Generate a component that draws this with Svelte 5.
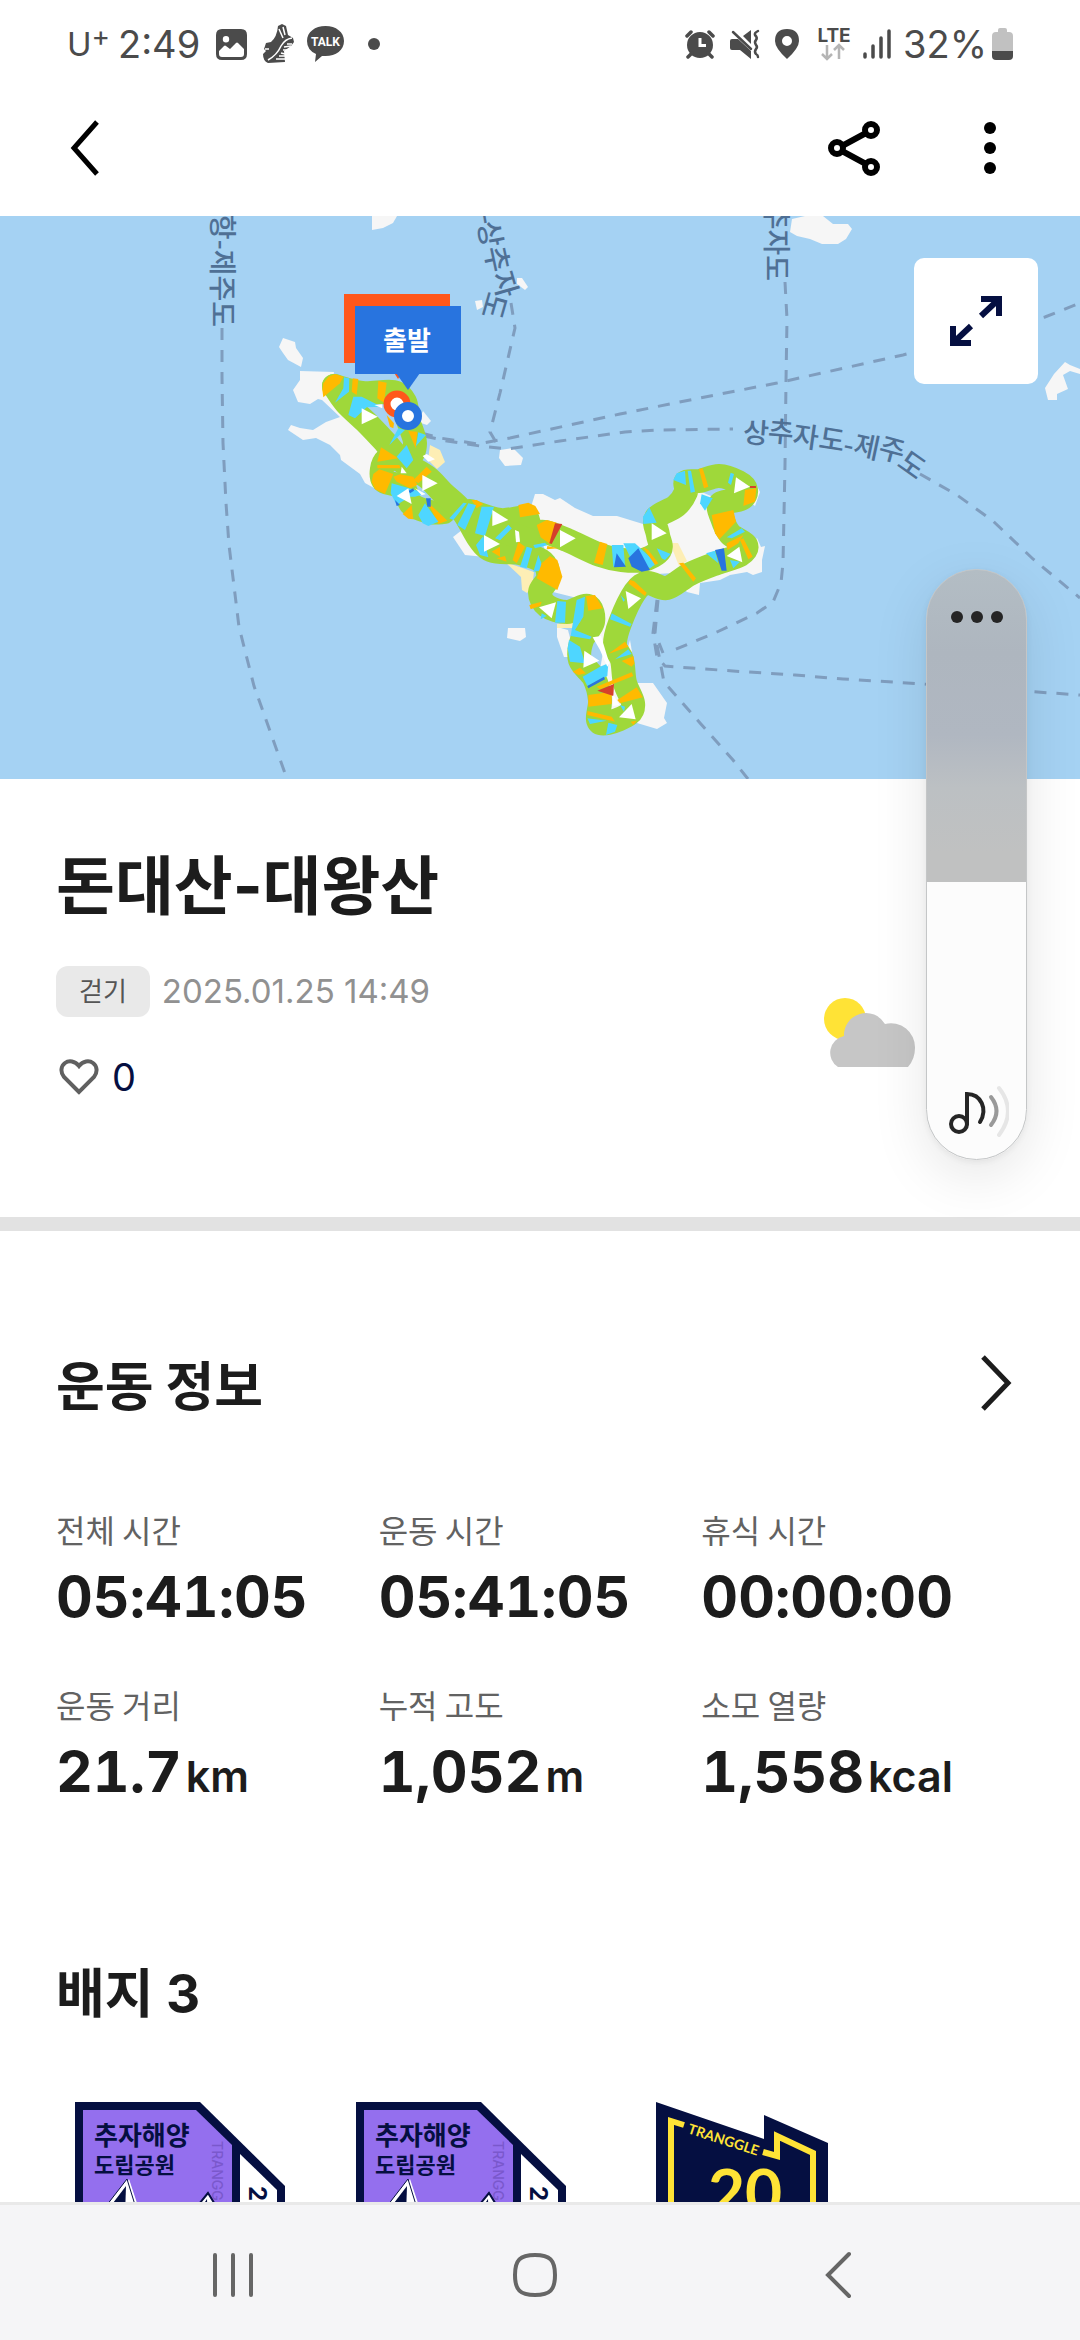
<script>
  let volume = $state(47);
  let likes = $state(0);

  const stats = [
    { label: '전체 시간', value: '05:41:05' },
    { label: '운동 시간', value: '05:41:05' },
    { label: '휴식 시간', value: '00:00:00' },
    { label: '운동 거리', value: '21.7', unit: 'km' },
    { label: '누적 고도', value: '1,052', unit: 'm' },
    { label: '소모 열량', value: '1,558', unit: 'kcal' }
  ];

  const islands = [
    '372,216 397,216 393,223 383,228 372,230',
    '517,278 522,278 528,287 525,290 517,284',
    '475,301 482,300 483,307 477,310',
    '500,450 513,448 523,458 521,465 505,466 499,458',
    '283,338 295,342 296,348 303,358 301,367 288,360 283,353 279,347',
    '300,371 334,372 330,396 345,417 360,416 385,440 378,470 374,488 365,483 360,474 341,460 340,455 330,445 316,438 303,440 288,430 291,425 300,428 313,430 326,422 340,417 322,400 318,399 310,404 298,402 293,390 300,380',
    '423,411 431,421 427,425 418,422',
    '535,494 543,494 555,500 560,498 575,508 593,516 617,516 643,524 668,524 697,490 720,500 738,545 690,572 640,575 610,622 612,700 600,640 585,600 545,590 545,550 530,510',
    '755,482 760,492 755,506 748,500',
    '757,538 761,547 765,546 762,560 762,572 753,575 747,572 730,575 720,580 700,583 699,595 687,592 680,585 740,560',
    '630,683 653,683 667,703 664,718 667,723 657,729 637,723',
    '605,640 640,710 612,712 600,670',
    '557,627 568,630 575,657 564,657 557,637',
    '585,680 610,680 610,710 592,700',
    '508,628 525,628 526,637 520,641 507,638',
    '453,537 462,530 490,543 485,557 465,555',
    '630,640 632,652 626,655',
    '790,232 792,219 805,216 823,216 833,224 848,224 852,229 846,239 838,244 822,244 810,239 797,236',
    '1065,362 1070,365 1080,369 1080,374 1070,371 1063,375 1068,389 1057,394 1057,400 1048,400 1045,388 1054,374'
  ];

  const beaches = [
    '430,445 440,450 445,462 437,469 428,460',
    '505,562 534,572 532,587 527,593 522,590 521,577',
    '670,543 678,543 687,561 679,566',
    '557,624 575,622 575,628 557,628',
    '462,529 484,538 482,541 461,532'
  ];

  const ferries = [
    'M222 328 L222 377 L223 443 L226 503 L229 545 L239 627 L254 686 L287 779',
    'M511 303 L515 328 L500 393 L490 432 L497 444',
    'M785 282 L787 319 L786 381 L785 465 L783 563 L781 583 L773 602 L757 613 L717 632 L667 653',
    'M421 433 L440 438 L478 444 L510 438 L620 414 L700 398 L777 383 L903 355 L1045 317 L1080 303',
    'M424 436 L447 441 L480 446 L508 449 L560 441 L625 432 L660 430 L733 429',
    'M920 474 L957 495 L993 521 L1033 559 L1080 598',
    'M657 600 L653 633 L657 657 L665 666 L677 667 L733 671 L795 675 L843 679 L923 684 L1080 695',
    'M658 600 L655 633 L663 653',
    'M657 645 L664 682 L700 723 L733 760 L748 779'
  ];

  const tracks = [
    '334 386 362 393 393 392 405 402 408 420 415 443 408 458 386 460 383 480 403 487 411 504 430 512 444 512',
    '334 386 346 403 367 423 385 442 403 462 427 477 443 493 463 512 487 548 520 553 543 562 548 578 540 592 547 606 567 612 588 606 593 622 582 640 580 660 594 678 600 700 598 720 608 723 629 714 633 703 625 683 622 660 615 645 620 623 635 592 648 583 667 588 690 574 717 563 740 555 746 545 730 534 722 518 720 504 741 499 746 490 738 482 719 476 700 481 686 482 686 492 676 506 656 518 658 535 660 550 643 560 622 560 600 555 567 540 545 532 530 532 526 518 500 520 470 511',
    '470 520 500 530 528 540'
  ].map(smooth);

  // Rounded path through every listed point.
  function smooth(list) {
    const n = list.split(' ').map(Number);
    const p = [];
    for (let i = 0; i < n.length; i += 2) p.push([n[i], n[i + 1]]);
    let d = `M${p[0]}`;
    for (let i = 0; i < p.length - 1; i++) {
      const a = p[i - 1] ?? p[i];
      const b = p[i];
      const c = p[i + 1];
      const e = p[i + 2] ?? c;
      d += `C${b[0] + (c[0] - a[0]) / 6} ${b[1] + (c[1] - a[1]) / 6} ${c[0] - (e[0] - b[0]) / 6} ${c[1] - (e[1] - b[1]) / 6} ${c[0]} ${c[1]}`;
    }
    return d;
  }

  // Pace colouring and direction arrows, drawn on three tiles at triple density.
  const O = '#ffba00';
  const C = '#4ed6ff';
  const B = '#2874df';
  const R = '#d5402b';
  const W = '#ffffff';
  const tiles = [
    {
      x: 180,
      y: 210,
      shapes: [
        [O, '427,540 430,520 445,500 465,492 490,500 480,520 430,562'],
        [O, '518,505 535,507 530,555 515,545'],
        [O, '595,513 620,518 612,578 592,565'],
        [O, '603,712 655,745 592,755'],
        [O, '592,765 658,765 662,775 592,775'],
        [O, '575,815 580,792 598,778 640,792 615,852 585,838'],
        [O, '640,800 660,793 700,800 712,825 690,835 650,815'],
        [O, '740,770 755,785 715,820 700,810'],
        [O, '685,663 712,665 707,715'],
        [O, '620,615 642,640 640,655 630,650'],
        [O, '668,912 695,885 700,928 685,926'],
        [O, '742,875 802,932 775,942'],
        [O, '875,870 890,870 910,882 890,895'],
        [O, '1015,885 1045,878 1066,888 1080,912 1020,922'],
        [C, '492,502 508,505 507,545 465,578 490,535'],
        [C, '520,560 545,560 605,590 560,592 525,625 505,615'],
        [C, '655,655 675,660 628,705'],
        [C, '715,667 738,675 708,708'],
        [C, '680,705 700,750 680,775 650,740'],
        [C, '635,820 740,850 705,860 690,860 650,885 632,850'],
        [C, '735,880 775,935 745,948 728,940 715,915'],
        [C, '850,878 860,880 820,930 808,925'],
        [C, '865,880 888,885 855,960 832,945'],
        [C, '905,890 942,890 915,978 885,970'],
        [C, '985,945 995,955 960,990 945,985'],
        [B, '738,865 752,865 752,890 742,890'],
        [B, '645,870 660,885 650,888'],
        [B, '685,843 700,835 702,842 690,850'],
        [W, '583,585 607,583 607,595'],
        [W, '665,770 680,790 662,790'],
        [W, '728,738 740,732 765,748 745,755'],
        [W, '705,835 738,852 725,856'],
        [W, '545,595 545,643 593,620'],
        [W, '727,795 727,843 773,820'],
        [W, '650,858 685,835 695,882'],
        [W, '937,900 937,948 985,930']
      ]
    },
    {
      x: 270,
      y: 400,
      shapes: [
        [O, '800,375 830,360 860,368 840,432 812,412'],
        [R, '855,370 877,372 845,432 838,430'],
        [C, '618,435 640,408 655,472 630,465'],
        [O, '665,455 690,440 690,470'],
        [O, '680,475 705,468 710,485'],
        [O, '745,425 765,440 740,490 728,480'],
        [C, '770,440 787,445 770,505 750,500'],
        [C, '805,465 822,510 790,515'],
        [C, '790,435 825,428 832,436 795,445'],
        [O, '832,438 865,445 830,448'],
        [C, '715,375 725,385 690,420 680,415'],
        [O, '840,468 862,480 877,530 862,570 800,535 815,490'],
        [W, '735,390 747,395 750,425 738,427'],
        [W, '642,405 642,455 690,432'],
        [W, '807,622 858,607 845,655']
      ]
    },
    {
      x: 500,
      y: 400,
      shapes: [
        [O, '300,425 322,432 308,495 282,488'],
        [C, '335,435 370,435 375,495 340,500'],
        [B, '350,460 378,500 342,502'],
        [C, '370,430 405,430 470,490 450,505 390,470'],
        [B, '385,475 415,445 450,510 425,515 395,500'],
        [O, '428,440 445,450 475,490 465,495'],
        [C, '470,445 512,462 495,480 485,475'],
        [C, '429,350 448,322 470,368 430,372'],
        [C, '520,240 530,220 555,212 558,255'],
        [C, '563,212 573,212 585,275 572,278'],
        [O, '597,207 608,205 625,260 612,265'],
        [C, '692,218 702,222 693,255 684,248'],
        [C, '605,283 638,295 615,332 600,310'],
        [O, '735,270 769,265 765,305 730,318'],
        [R, '750,258 768,258 768,264 750,264'],
        [O, '635,345 700,330 708,365 658,418 645,400'],
        [C, '725,385 735,395 695,415 680,412'],
        [O, '680,430 730,405 715,430 682,450'],
        [O, '720,420 730,415 758,470 745,478'],
        [C, '690,480 720,485 700,505'],
        [B, '645,450 672,445 680,512 665,512'],
        [C, '618,460 645,452 655,490'],
        [O, '537,490 550,488 588,535 580,545'],
        [O, '390,540 402,543 440,578 435,588 385,550'],
        [C, '362,585 375,600 370,605'],
        [C, '335,640 395,672 390,680 330,658'],
        [O, '375,725 385,740 325,762'],
        [O, '400,768 403,790 395,800 365,783'],
        [C, '385,748 395,762 345,778'],
        [O, '395,817 400,828 300,868 290,860'],
        [O, '410,862 428,892 360,910 352,900'],
        [O, '265,885 335,875 335,912 265,920'],
        [R, '292,872 342,852 340,888'],
        [C, '248,830 300,800 325,790 322,828 262,858'],
        [B, '262,858 312,830 315,838 265,865'],
        [C, '207,720 240,740 255,790 210,785 203,745'],
        [C, '230,600 255,590 250,650 225,690 275,710 270,718 212,708'],
        [O, '258,588 285,585 308,625 265,632'],
        [C, '172,603 198,605 195,668 165,668'],
        [O, '88,615 125,605 120,618 92,628'],
        [C, '125,640 140,648 122,658'],
        [O, '218,815 240,803 258,820 235,825'],
        [O, '262,933 335,950 345,965 262,945'],
        [C, '262,955 320,962 270,972'],
        [C, '325,968 352,975 345,995 318,1005'],
        [C, '360,915 375,920 372,935'],
        [O, '392,965 410,962 400,975'],
        [W, '278,712 303,708 328,790 322,800 300,750'],
        [W, '340,885 358,915 338,918'],
        [W, '180,390 180,442 227,415'],
        [W, '455,370 455,420 500,400'],
        [W, '708,232 702,280 750,260'],
        [W, '680,468 718,440 727,487'],
        [W, '377,573 385,627 423,595'],
        [W, '253,752 250,803 298,782'],
        [W, '357,952 395,912 407,958']
      ]
    }
  ];

  // Place names that bend along a ferry line: glyph, centre and angle.
  const bentLabels = [
    ['-', 487, 219, 80],
    ['상', 490, 234, 80],
    ['추', 497, 259, 78],
    ['자', 505, 284, 74],
    ['도', 494, 306, 106],
    ['상', 756, 433, 4],
    ['추', 781, 432, 5],
    ['자', 806, 437, 8],
    ['도', 832, 440, 9],
    ['-', 849, 445, 12],
    ['제', 867, 447, 12],
    ['주', 892, 450, 15],
    ['도', 912, 465, 35]
  ];
</script>

{#snippet parkBadge()}
  <svg class="badge-art" viewBox="0 0 212 200" aria-hidden="true">
    <path d="M0 0H125L210 84V200H0z" fill="#050f41" />
    <path d="M8 8H121L157 43V200H8z" fill="#946fee" />
    <path d="M165 52L202 88V200H165z" fill="#fff" />
    <text class="park-name" x="19" y="43" font-size="26">추자해양</text>
    <text class="park-name" x="19" y="71" font-size="22">도립공원</text>
    <text class="park-brand" transform="translate(137 39) rotate(90)">TRANGGLE</text>
    <text class="park-no" transform="translate(174 84) rotate(90)">20</text>
    <path d="M54 77L63 104L88 200H-4z" fill="#fff" />
    <path d="M52 77L8 134V200H90z" fill="#fff" stroke="#050f41" stroke-width="1" />
    <path d="M51 84L22 122L8 141V200H47z" fill="#050f41" />
    <path d="M133 91L120 107L105 130V200H157V130z" fill="#fff" stroke="#050f41" stroke-width="2" />
    <path d="M132 97L110 130V200H136z" fill="#050f41" />
  </svg>
{/snippet}

<div class="phone">
  <header class="status">
    <div class="status-side">
      <span class="carrier">U<sup>+</sup></span>
      <time>2:49</time>
      <svg class="s-photo" width="31" height="31" viewBox="0 0 31 31" aria-hidden="true">
        <path fill-rule="evenodd" d="M6 0H25Q31 0 31 6V25Q31 31 25 31H6Q0 31 0 25V6Q0 0 6 0zM10 7A3.200 3.200 0 1 0 10 13.400A3.200 3.200 0 1 0 10 7zM3 22V25Q3 28 6 28H25Q28 28 28 25V20L22 14Q21 13 20 14L14 20L10 17Q9 16 8 17z" />
      </svg>
      <svg class="s-shoe" width="31" height="40" viewBox="0 0 31 40" aria-hidden="true">
        <path d="M15 2L19 0L23 2L25 11L30 14L31 18L28 22L21 27L22 38L5 39Q0 37 0 30L3 27L1 25L3 19L8 18Q14 13 15 2z" />
        <path d="M29 14Q22 15 18 22Q14 31 5 36M24 20H29M21 23L28 22M20 26H25M18 29L22 30M16 32H22M13 35H22M20 3L22 11M16 5L20 14M2 25H6" fill="none" stroke="#fff" stroke-width="1.500" />
      </svg>
      <svg width="37" height="36" viewBox="0 0 37 36" aria-hidden="true">
        <path d="M18.500 0C29 0 37 6 37 15S29 30 18.500 30L15 30L8 36L9 28Q0 24 0 15C0 6 8 0 18.500 0z" />
        <text class="talk" x="18.500" y="20">TALK</text>
      </svg>
      <i class="more-dot"></i>
    </div>
    <div class="status-side right">
      <svg width="30" height="30" viewBox="0 0 30 30" aria-hidden="true">
        <path fill-rule="evenodd" d="M15 3A13 13 0 1 0 15 29A13 13 0 1 0 15 3zM13.500 9H16.500V15H21V18H13.500z" />
        <path d="M2 7L6 3M28 7L24 3M3 28L7 24M27 28L23 24" stroke="#4b4b4b" stroke-width="3.500" stroke-linecap="round" />
      </svg>
      <svg width="30" height="30" viewBox="0 0 30 30" aria-hidden="true">
        <path d="M0 12Q0 10 2 10H8L21 22V30L10 21H2Q0 21 0 19zM13 7L21 1V15z" />
        <path d="M3 3L21 20" stroke="#4b4b4b" stroke-width="2.500" stroke-linecap="round" />
        <path d="M28 2Q24 4 25 6Q28 9 26 11Q24 13 26 16Q28 18 26 20Q24 23 26 25Q28 26 28 28" fill="none" stroke="#4b4b4b" stroke-width="2.500" stroke-linecap="round" />
      </svg>
      <svg class="s-pin" width="24" height="30" viewBox="0 0 24 30" aria-hidden="true">
        <path fill-rule="evenodd" d="M12 0Q24 0 24 12Q24 19 12 30Q0 19 0 12Q0 0 12 0zM12 7A5 5 0 1 0 12 17A5 5 0 1 0 12 7z" />
      </svg>
      <svg class="s-lte" width="34" height="38" viewBox="0 -3 34 38" aria-hidden="true">
        <text class="lte" x="17" y="14">LTE</text>
        <path d="M10 17V31M5 26L10 31L15 26M22 31V17M17 22L22 17L27 22" fill="none" stroke="#b5b5b5" stroke-width="2.500" />
      </svg>
      <svg class="s-bars" width="28" height="30" viewBox="0 0 28 30" aria-hidden="true">
        <path d="M2 25V28M10 17V28M18 9V28M26 2V28" stroke="#4b4b4b" stroke-width="3.500" stroke-linecap="round" />
      </svg>
      <span>32%</span>
      <svg class="s-batt" width="21" height="32" viewBox="0 0 21 32" aria-hidden="true">
        <path d="M6 4V2Q6 0 8 0H13Q15 0 15 2V4H17Q21 4 21 8V23H0V8Q0 4 4 4z" fill="#c1c1c1" />
        <path d="M0 23H21V28Q21 32 17 32H4Q0 32 0 28z" />
      </svg>
    </div>
  </header>

  <nav class="appbar" aria-label="상단">
    <button aria-label="뒤로">
      <svg width="30" height="56" viewBox="0 0 30 56"><path d="M27 2L4 28L27 54" fill="none" stroke="#000" stroke-width="5" /></svg>
    </button>
    <button class="share" aria-label="공유">
      <svg width="52" height="56" viewBox="0 0 52 56" fill="none" stroke="#000" stroke-width="6">
        <path d="M14 26L38 13M14 31L38 44" /><circle cx="9" cy="28" r="6" /><circle cx="43" cy="10" r="6" /><circle cx="43" cy="47" r="6" />
      </svg>
    </button>
    <button aria-label="더보기">
      <svg width="12" height="56" viewBox="0 0 12 56"><circle cx="6" cy="8" r="6" /><circle cx="6" cy="28" r="6" /><circle cx="6" cy="48" r="6" /></svg>
    </button>
  </nav>

  <main>
    <section class="map" aria-label="경로 지도">
      <svg class="map-art" viewBox="0 216 1080 563" preserveAspectRatio="xMidYMid slice" aria-hidden="true">
        <rect x="0" y="216" width="1080" height="563" fill="#a5d2f3" />
        {#each islands as pts}<polygon points={pts} fill="#f6f6f6" />{/each}
        {#each beaches as pts}<polygon points={pts} fill="#fdeeb5" />{/each}
        {#each ferries as d}<path {d} class="ferry" />{/each}
        {#each tracks as d}<path {d} class="track" />{/each}
        {#each tiles as tile}
          <g transform="translate({tile.x} {tile.y}) scale(0.33333)">
            {#each tile.shapes as [fill, pts]}<polygon points={pts} {fill} />{/each}
          </g>
        {/each}
        <g class="place">
          <text transform="translate(212 327) rotate(90)" text-anchor="end">항-제주도</text>
          <text transform="translate(766 281) rotate(90)" text-anchor="end">추자도</text>
          {#each bentLabels as [ch, x, y, a]}
            <text transform="translate({x} {y}) rotate({a})" text-anchor="middle" y="10">{ch}</text>
          {/each}
        </g>
        <rect x="344" y="294" width="106" height="69" fill="#ff571b" />
        <path d="M393 371L403 371L398 379z" fill="#ff571b" />
        <circle cx="397" cy="404" r="10" fill="#fff" stroke="#ff571b" stroke-width="7" />
        <rect x="355" y="306" width="106" height="68" fill="#2874df" />
        <path d="M396 373H420L408 390z" fill="#2874df" />
        <circle cx="408" cy="416" r="10" fill="#fff" stroke="#2874df" stroke-width="8" />
        <text class="start" x="407" y="350">출발</text>
      </svg>
      <button class="expand" aria-label="지도 확대">
        <svg width="52" height="50" viewBox="0 0 52 50" fill="none" stroke="#050f41" stroke-width="6">
          <path d="M31 3H49V20M48 4L31 20M21 47H3V30M4 46L21 30" />
        </svg>
      </button>
    </section>

    <section class="summary">
      <h1>돈대산-대왕산</h1>
      <div class="meta">
        <span class="chip">걷기</span>
        <time>2025.01.25 14:49</time>
      </div>
      <button class="like" aria-label="좋아요" onclick={() => (likes = likes ? 0 : 1)}>
        <svg width="40" height="36" viewBox="0 0 40 36"><path d="M20 33L5 18C1 13 2 7 6 4C10 1 16 2 20 7C24 2 30 1 34 4C38 7 39 13 35 18z" fill="none" stroke="#606060" stroke-width="4" /></svg>
        <span>{likes}</span>
      </button>
      <svg class="weather" width="92" height="70" viewBox="0 0 92 70" role="img" aria-label="구름 조금">
        <circle cx="21" cy="21" r="21" fill="#ffe336" />
        <path d="M14 69A17 17 0 0 1 20 38A22 22 0 0 1 61 26A24 24 0 0 1 91 50Q91 61 84 69z" fill="#c6c6c6" />
      </svg>
    </section>

    <section class="workout">
      <a class="section-link" href="#workout">
        <h2>운동 정보</h2>
        <svg width="32" height="56" viewBox="0 0 32 56" aria-hidden="true"><path d="M3 2L28 28L3 54" fill="none" stroke="#1c1c1c" stroke-width="5" /></svg>
      </a>
      <dl>
        {#each stats as s}
          <div>
            <dt>{s.label}</dt>
            <dd>{s.value}{#if s.unit}<small>{s.unit}</small>{/if}</dd>
          </div>
        {/each}
      </dl>
    </section>

    <section class="badges">
      <h2>배지 3</h2>
      <ul>
        <li>{@render parkBadge()}</li>
        <li>{@render parkBadge()}</li>
        <li>
          <svg class="badge-art" viewBox="0 0 212 200" aria-hidden="true">
            <path d="M19 0L127 37V13L191 41V200H19z" fill="#050f41" />
            <path d="M47 23L34 19V200M126 50L140 54V34L176 51V200" fill="none" stroke="#ffe336" stroke-width="6" />
            <text class="km-brand" transform="translate(50 31) rotate(18)">TRANGGLE</text>
            <text class="km-no" x="108" y="113">20</text>
          </svg>
        </li>
      </ul>
    </section>
  </main>

  <aside class="volume" aria-label="음량">
    <input type="range" min="0" max="100" bind:value={volume} aria-label="음량" style="--level: {volume}%" />
    <button aria-label="음량 설정"><i></i><i></i><i></i></button>
    <svg class="note" width="62" height="56" viewBox="0 0 62 56" fill="none" stroke-width="4" stroke-linecap="round" aria-hidden="true">
      <g stroke="#252525"><circle cx="12" cy="40" r="8" /><path d="M20 40V10C34 10 41 25 33 38" /></g>
      <path d="M44 13Q55 27 44 41" stroke="#999" />
      <path d="M52 4Q70 27 52 51" stroke="#e6e6e6" />
    </svg>
  </aside>

  <nav class="navbar" aria-label="시스템">
    <button aria-label="최근 앱"><svg width="44" height="46" viewBox="0 0 44 46"><path d="M4 3V43M22 3V43M40 3V43" /></svg></button>
    <button aria-label="홈"><svg width="46" height="46" viewBox="0 0 46 46"><path d="M23 3C38 3 43 8 43 23S38 43 23 43S3 38 3 23S8 3 23 3z" /></svg></button>
    <button aria-label="뒤로"><svg width="28" height="48" viewBox="0 0 28 48"><path d="M25 3L4 24L25 45" /></svg></button>
  </nav>
</div>

<style>
  :global(body) { margin: 0; background: #fff; }
  * { box-sizing: border-box; }
  svg { display: block; flex: none; }
  button { border: 0; padding: 0; background: none; font: inherit; color: inherit; cursor: pointer; display: flex; align-items: center; justify-content: center; }
  .phone {
    position: relative;
    height: 100vh;
    display: flex;
    flex-direction: column;
    background: #fff;
    color: #1c1c1c;
    font-family: Inter, "Noto Sans CJK KR", sans-serif;
  }
  .status {
    flex: none;
    height: 88px;
    padding: 0 67px;
    display: flex;
    justify-content: space-between;
    align-items: center;
    font: 400 38px/56px Inter, "Noto Sans", sans-serif;
    color: #4b4b4b;
    fill: #4b4b4b;
  }
  .status-side { display: flex; align-items: center; }
  .carrier { width: 51px; font-size: 33px; white-space: nowrap; }
  .carrier sup { font-size: 28px; line-height: 0; vertical-align: 10px; }
  .s-photo { margin-left: 16px; }
  .s-shoe { margin: 0 13px 0 16px; }
  .talk { font: 700 12px Roboto, sans-serif; fill: #fff; text-anchor: middle; }
  .more-dot { width: 12px; height: 12px; margin-left: 24px; border-radius: 50%; background: #4b4b4b; }
  .right { gap: 15px; }
  .s-pin { margin-right: 3px; }
  .s-lte, .s-bars { margin-right: -3px; }
  .lte { font: 700 19px Inter, sans-serif; text-anchor: middle; }
  .s-batt { margin-left: -10px; }

  .appbar { flex: none; height: 128px; padding: 0 84px 8px 70px; display: flex; align-items: center; }
  .share { margin: 0 104px 0 auto; }

  main { flex: 1; min-height: 0; overflow-y: auto; scrollbar-width: none; }
  .map { position: relative; }
  .map-art { width: 100%; height: auto; }
  .ferry { fill: none; stroke: #7f9dbe; stroke-width: 3; stroke-dasharray: 12 10; }
  .track { fill: none; stroke: #9fd83a; stroke-width: 24; stroke-linecap: round; stroke-linejoin: round; }
  .place { font: 500 28px "Noto Sans CJK KR", sans-serif; fill: #4f7095; }
  .start { font: 700 26px "Noto Sans CJK KR", sans-serif; fill: #fff; text-anchor: middle; }
  .expand { position: absolute; top: 42px; right: 42px; width: 124px; height: 126px; border-radius: 10px; background: #fff; }

  .summary { position: relative; padding: 65px 56px 116px; border-bottom: 14px solid #e2e2e2; }
  h1 { margin: 0; font-size: 64px; line-height: 84px; font-weight: 700; }
  .meta { display: flex; align-items: center; gap: 12px; margin-top: 38px; }
  .chip { padding: 0 23px; border-radius: 12px; background: #e9e9e9; color: #555; font-size: 26px; line-height: 51px; }
  .meta time { color: #919191; font-size: 33px; line-height: 51px; font-weight: 400; }
  .like { margin-top: 36px; padding-left: 3px; gap: 13px; color: #050f41; font-size: 38px; line-height: 48px; }
  .weather { position: absolute; top: 219px; right: 164px; }

  .workout { padding: 114px 56px 0; }
  .section-link { display: flex; justify-content: space-between; align-items: center; padding-right: 12px; color: inherit; text-decoration: none; }
  h2 { margin: 0; font-size: 53px; line-height: 76px; font-weight: 700; font-family: "Noto Sans CJK KR", sans-serif; }
  dl { margin: 84px 0 0; display: grid; grid-template-columns: repeat(3, 1fr); row-gap: 41px; }
  dt { color: #626262; font: 400 32px/48px "Noto Sans CJK KR", sans-serif; }
  dd { margin: 2px 0 0; font: 700 57px/84px Inter, sans-serif; font-variant-numeric: tabular-nums; font-feature-settings: "calt" 0; white-space: nowrap; }
  dd small { margin-left: 4px; font: 600 43px/1 Inter, sans-serif; }

  .badges { padding: 142px 56px 60px; }
  .badges h2 { font-family: Inter, "Noto Sans CJK KR", sans-serif; }
  ul { margin: 70px 0 0; padding: 0 0 0 19px; list-style: none; display: flex; gap: 69px; }
  .badge-art { width: 212px; height: 200px; }
  .park-name { font-family: "Noto Sans CJK KR", sans-serif; font-weight: 700; fill: #050f41; }
  .park-brand { font: 500 14px Inter, sans-serif; fill: #7a58cc; }
  .park-no { font: 700 24px Inter, sans-serif; fill: #050f41; }
  .km-brand { font: 700 14px Lato, sans-serif; fill: #ffe336; }
  .km-no { font: 700 64px Lato, sans-serif; fill: #ffe336; text-anchor: middle; }

  .volume {
    position: absolute;
    top: 569px;
    right: 53px;
    width: 101px;
    height: 591px;
    border-radius: 51px;
    box-shadow: 0 16px 56px rgba(0, 0, 0, 0.1), 0 2px 6px rgba(0, 0, 0, 0.06);
  }
  .volume input {
    appearance: none;
    writing-mode: vertical-lr;
    direction: rtl;
    display: block;
    width: 100%;
    height: 100%;
    margin: 0;
    border: 1px solid #c4c6c7;
    border-radius: 51px;
    background:
      linear-gradient(to top, #fcfcfc var(--level), transparent var(--level)),
      linear-gradient(#b3bdc4, #aeb6bf 14%, #b0b7c1 28%, #bcc0c3 37%, #c0c1c1 48%);
  }
  .volume input::-webkit-slider-thumb { appearance: none; width: 100px; height: 4px; background: transparent; }
  .volume button { position: absolute; top: 24px; left: 0; width: 100%; height: 48px; gap: 8px; }
  .volume i { width: 12px; height: 12px; border-radius: 50%; background: #252525; }
  .note { position: absolute; left: 21px; bottom: 20px; pointer-events: none; }

  .navbar { flex: none; height: 138px; border-top: 3px solid #e9e9e9; background: #f5f5f7; display: grid; grid-template-columns: 1fr 1fr 1fr; justify-items: center; padding: 5px 91px 0 82px; }
  .navbar svg { fill: none; stroke: #666; stroke-width: 4; stroke-linecap: round; }
</style>
